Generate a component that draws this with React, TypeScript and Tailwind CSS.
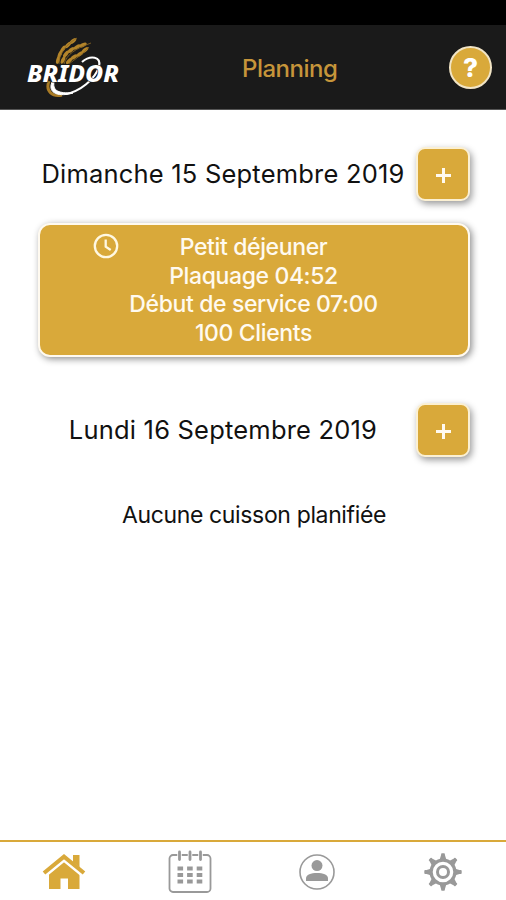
import type { ReactNode } from 'react';

interface Service {
	name: string;
	lines: string[];
}

interface Day {
	label: string;
	services: Service[];
}

const DAYS: Day[] = [
	{
		label: 'Dimanche 15 Septembre 2019',
		services: [
			{
				name: 'Petit déjeuner',
				lines: ['Plaquage 04:52', 'Début de service 07:00', '100 Clients'],
			},
		],
	},
	{ label: 'Lundi 16 Septembre 2019', services: [] },
];

const GEAR_TEETH = [0, 45, 90, 135, 180, 225, 270, 315];

// x, y and rotation of each grain
const GRAINS = [
	[33, 24, -75],
	[35, 18, -65],
	[38, 13, -55],
	[43, 9, -45],
	[48, 5, -40],
	[38, 24, -65],
	[41, 18, -50],
	[46, 14, -40],
	[52, 11, -30],
	[58, 9, -25],
	[44, 25, -45],
	[49, 21, -35],
	[55, 18, -35],
	[60, 14, -40],
];

function Logo() {
	return (
		<svg aria-label="Bridor" className="h-[62px] w-[100px]" viewBox="0 0 100 62">
			{/* Wheat */}
			<g fill="#b3842a">
				{GRAINS.map(([x, y, angle]) => (
					<ellipse cx={x} cy={y} key={`${x}-${y}`} rx={4} ry={1.8} transform={`rotate(${angle} ${x} ${y})`} />
				))}
			</g>
			<path
				d="M34 28C34 17 41 9 52 2M39 28C42 18 50 13 66 7M44 28C50 23 57 19 64 11"
				fill="none"
				stroke="#8f6a22"
				strokeWidth={0.8}
			/>
			{/* Ribbon */}
			<path
				d="M24 45C20 56 28 61 37 59"
				fill="none"
				stroke="#a97b25"
				strokeWidth={3}
			/>
			<path
				d="M27 46C22 58 35 61 48 57C38 57 27 57 29 46z"
				fill="#fff"
				stroke="#fff"
				strokeWidth={1}
			/>
			<path
				d="M40 58C55 56 70 43 74 31C77 20 65 19 57 26"
				fill="none"
				stroke="#fff"
				strokeWidth={2.2}
			/>
			<text
				className="font-['Noto_Sans'] text-[23.5px] font-extrabold italic"
				fill="#fff"
				lengthAdjust="spacingAndGlyphs"
				paintOrder="stroke"
				stroke="#1a1a1a"
				strokeWidth={1.2}
				textLength={92}
				x={2}
				y={45.5}
			>
				BRIDOR
			</text>
		</svg>
	);
}

function ClockIcon() {
	return (
		<svg aria-hidden="true" className="h-[26px] w-[26px]" fill="none" stroke="#fff8e2" strokeWidth={2.3} viewBox="0 0 26 26">
			<circle cx={13} cy={13} r={11.2} />
			<path d="M12.7 6.5V13.6L17.7 17" />
		</svg>
	);
}

function HomeIcon() {
	return (
		<svg aria-hidden="true" className="ml-[1px] h-[37px] w-[44px]" viewBox="0 0 44 37">
			<g fill="#d9a93a">
				<path d="M31 2h6.5v14L31 10z" />
				<path d="M22 8L37.5 21V36H26V25.5h-7.500V36H7V21z" />
			</g>
			<path d="M2.500 21.500L22 5.500L41.500 21.500" fill="none" stroke="#fff" strokeWidth={6} />
			<path d="M2 20L22 3.600L42 20" fill="none" stroke="#d9a93a" strokeWidth={4} />
		</svg>
	);
}

function CalendarIcon() {
	return (
		<svg aria-hidden="true" className="mt-[2px] h-[44px] w-[44px]" viewBox="0 0 44 44">
			<rect fill="none" height={37} rx={3.5} stroke="#999" strokeWidth={1.8} width={41} x={1.5} y={5} />
			<path d="M11.5 1.5v9M22 1.5v9M32.5 1.5v9" stroke="#fff" strokeWidth={4.5} />
			<path d="M11.5 2v7.500M22 2v7.500M32.5 2v7.500" stroke="#999" strokeLinecap="round" strokeWidth={2.8} />
			<path
				d="M9.500 18.500h25M9.500 25h25M9.500 31.500h25"
				stroke="#999"
				strokeDasharray="5.600 4"
				strokeWidth={4}
			/>
		</svg>
	);
}

function UserIcon() {
	return (
		<svg aria-hidden="true" className="mt-[2px] ml-[1px] h-[38px] w-[38px]" viewBox="0 0 38 38">
			<circle cx={19} cy={19} fill="none" r={17} stroke="#999" strokeWidth={1.6} />
			<circle cx={19} cy={12.6} fill="#999" r={5.5} />
			<path d="M8 28v-2.500C8 21.500 13 20 19 20s11 1.500 11 5.500V28z" fill="#999" />
		</svg>
	);
}

function GearIcon() {
	return (
		<svg aria-hidden="true" className="mt-[2px] ml-[1px] h-[40px] w-[40px]" fill="none" stroke="#999" viewBox="0 0 40 40">
			<circle cx={20} cy={20} r={11.900} strokeWidth={3.2} />
			<circle cx={20} cy={20} r={5.500} strokeWidth={3} />
			{GEAR_TEETH.map((angle) => (
				<path
					d="M17.500 8L19 3V2.200h2V3L22.500 8z"
					fill="#999"
					key={angle}
					strokeLinejoin="round"
					strokeWidth={1.8}
					transform={`rotate(${angle} 20 20)`}
				/>
			))}
		</svg>
	);
}

function AddButton() {
	return (
		<button
			className="flex h-[54px] w-[54px] shrink-0 items-center justify-center rounded-[9px] border-2 border-[#fbf0d3] bg-[#d9a93a] shadow-[2px_3px_7px_rgba(0,0,0,0.4)]"
			type="button"
		>
			<svg aria-hidden="true" className="mt-[2px] h-[15px] w-[15px]" stroke="#fffaf0" strokeWidth={3} viewBox="0 0 15 15">
				<path d="M7.500 0v15M0 7.500h15" />
			</svg>
		</button>
	);
}

function ServiceCard({ service }: { service: Service }) {
	return (
		<div className="flex h-[134px] rounded-[12px] border-2 border-[#fffaf0] bg-[#d9a93a] pt-[8px] shadow-[2px_2px_7px_rgba(0,0,0,0.45)]">
			<div className="w-[80px] shrink-0 pl-[53px]">
				<ClockIcon />
			</div>
			<div className="mr-[81px] flex-1 text-center text-[23px] leading-[28.7px] font-medium tracking-[-0.37px] whitespace-nowrap text-[#fffaf0]">
				<p>{service.name}</p>
				{service.lines.map((line) => (
					<p key={line}>{line}</p>
				))}
			</div>
		</div>
	);
}

function DaySection({ day }: { day: Day }) {
	return (
		<section>
			<div className="flex h-[54px] items-center">
				<h2 className="w-[371px] text-center text-[25.5px] tracking-[0.2px] whitespace-nowrap">{day.label}</h2>
				<div className="ml-[8px]">
					<AddButton />
				</div>
			</div>
			<div className="mt-[22px]">
				{day.services.length > 0 ? (
					day.services.map((service) => <ServiceCard key={service.name} service={service} />)
				) : (
					<p className="pt-[19px] text-center text-[23px] tracking-[-0.36px]">Aucune cuisson planifiée</p>
				)}
			</div>
		</section>
	);
}

function Tab({ label, children }: { label: string; children: ReactNode }) {
	return (
		<button aria-label={label} className="flex flex-1 items-center justify-center" type="button">
			{children}
		</button>
	);
}

export default function App() {
	return (
		<div className="flex h-[900px] w-[506px] flex-col bg-white font-['Inter',sans-serif] text-[#111]">
			<div className="h-[25px] bg-black" />
			<header className="flex h-[85px] items-center border-b border-[#555] bg-[#1a1a1a] pr-[14px] pl-[25px]">
				<Logo />
				<h1 className="mt-[3px] ml-[117px] text-[24px] font-medium tracking-[-0.5px] text-[#c6953a]">Planning</h1>
				<button
					className="ml-auto flex h-[43px] w-[43px] items-center justify-center rounded-full border-2 border-[#f1e4c5] bg-[#d9a93a] text-[26px] font-extrabold text-white"
					type="button"
				>
					?
				</button>
			</header>

			<main className="flex flex-1 flex-col gap-[46px] pt-[37px] pr-[36px] pl-[38px]">
				{DAYS.map((day) => (
					<DaySection day={day} key={day.label} />
				))}
			</main>

			<nav className="flex h-[60px] border-t-[2.500px] border-[#d9a93a]">
				<Tab label="Accueil">
					<HomeIcon />
				</Tab>
				<Tab label="Planning">
					<CalendarIcon />
				</Tab>
				<Tab label="Profil">
					<UserIcon />
				</Tab>
				<Tab label="Réglages">
					<GearIcon />
				</Tab>
			</nav>
		</div>
	);
}
